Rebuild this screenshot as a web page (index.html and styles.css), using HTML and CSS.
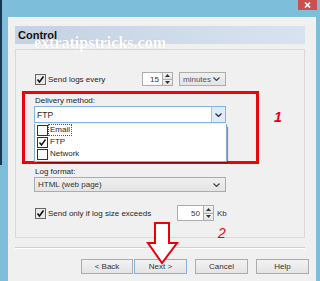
FILE: index.html
```html
<!DOCTYPE html>
<html>
<head>
	<meta charset="UTF-8">
<link rel="stylesheet" href="styles.css">
</head>
<body>
<div class="titlebar">
	<span class="close"><svg width="7" height="6" viewBox="0 0 7 6"><path d="M1 0.5L6 5.5M6 0.5L1 5.5" stroke="#fff" stroke-width="1.6"/></svg></span>
</div>
<div class="dialog">
	<div class="header">Control</div>
	<div class="panel">
		<div class="row row-every">
			<label class="check-label w-every"><span class="check on"><svg width="9" height="9" viewBox="0 0 9 9"><path d="M1.5 4.5L3.5 7L7.5 1.5" stroke="#111" stroke-width="1.6" fill="none"/></svg></span>Send logs every</label>
			<span class="spin spin-every">
				<span class="spin-value">15</span>
				<span class="spin-arrows">
					<span class="spin-btn"><svg width="5" height="3" viewBox="0 0 5 3"><path d="M0 3L2.5 0L5 3Z" fill="#333"/></svg></span>
					<span class="spin-btn"><svg width="5" height="3" viewBox="0 0 5 3"><path d="M0 0L2.5 3L5 0Z" fill="#333"/></svg></span>
				</span>
			</span>
			<span class="select select-minutes"><span class="select-text">minutes</span><svg width="7" height="4" viewBox="0 0 7 4"><path d="M0.5 0.5L3.5 3.5L6.5 0.5" stroke="#444" stroke-width="1.2" fill="none"/></svg></span>
		</div>
		<div class="redbox">
			<div class="caption">Delivery method:</div>
			<div class="combo">
				<span class="combo-text">FTP</span>
				<span class="combo-btn"><svg width="7" height="4" viewBox="0 0 7 4"><path d="M0.5 0.5L3.5 3.5L6.5 0.5" stroke="#333" stroke-width="1.3" fill="none"/></svg></span>
			</div>
			<ul class="droplist">
				<li><span class="check"></span><span class="item focus">Email</span></li>
				<li><span class="check on"><svg width="9" height="9" viewBox="0 0 9 9"><path d="M1.5 4.5L3.5 7L7.5 1.5" stroke="#111" stroke-width="1.4" fill="none"/></svg></span><span class="item">FTP</span></li>
				<li><span class="check"></span><span class="item">Network</span></li>
			</ul>
		</div>
		<div class="caption caption-format">Log format:</div>
		<div class="select select-format"><span class="select-text">HTML (web page)</span><svg width="7" height="4" viewBox="0 0 7 4"><path d="M0.5 0.5L3.5 3.5L6.5 0.5" stroke="#444" stroke-width="1.2" fill="none"/></svg></div>
		<div class="row row-size">
			<label class="check-label w-size"><span class="check on"><svg width="9" height="9" viewBox="0 0 9 9"><path d="M1.5 4.5L3.5 7L7.5 1.5" stroke="#111" stroke-width="1.6" fill="none"/></svg></span>Send only if log size exceeds</label>
			<span class="spin spin-size">
				<span class="spin-value">50</span>
				<span class="spin-arrows">
					<span class="spin-btn"><svg width="5" height="3" viewBox="0 0 5 3"><path d="M0 3L2.5 0L5 3Z" fill="#333"/></svg></span>
					<span class="spin-btn"><svg width="5" height="3" viewBox="0 0 5 3"><path d="M0 0L2.5 3L5 0Z" fill="#333"/></svg></span>
				</span>
			</span>
			<span class="unit">Kb</span>
		</div>
	</div>
	<div class="separator"></div>
	<div class="buttons">
		<button class="btn btn-back">&lt; Back</button>
		<button class="btn btn-next">Next &gt;</button>
		<button class="btn">Cancel</button>
		<button class="btn">Help</button>
	</div>
</div>
<div class="watermark">extratipstricks.com</div>
<span class="mark mark-1">1</span>
<span class="mark mark-2">2</span>
<svg class="arrow" width="34" height="46" viewBox="146 221 34 46"><path d="M155 223L155 243L148 243L162 263L177 243L169 243L169 223Z" fill="#fff" stroke="#e8000b" stroke-width="2"/></svg>
</body>
</html>
```
FILE: styles.css
```css
html,body{margin:0;padding:0;}
body{width:320px;height:281px;overflow:hidden;position:relative;background:linear-gradient(#1b3550,#1b3550) no-repeat 0 0/2px 165px,#7dbedb;font-family:"Liberation Sans",Arial,sans-serif;font-size:8px;color:#1e1e1e;}
.titlebar{height:17px;display:flex;justify-content:flex-end;}
.close{width:19px;height:10px;margin-right:3px;background:#c9504f;display:flex;align-items:center;justify-content:center;}
.dialog{margin-left:8px;width:308px;height:264px;box-sizing:border-box;padding:9px 11px 0 7px;background:#f0f0f0;}
.header{height:18px;line-height:18px;padding-left:3px;font-size:11px;font-weight:bold;color:#111;background:linear-gradient(to right,#c4d2e1,#d7e3f0);}
.panel{margin-top:5px;height:189px;box-sizing:border-box;border:1px solid #d9d9d9;display:flex;flex-direction:column;align-items:flex-start;}
.row{display:flex;align-items:center;padding-left:19px;}
.row-every{margin-top:22px;height:14px;}
.row-size{margin-top:13px;height:16px;}
.check-label{display:flex;align-items:center;gap:2px;}
.w-every{width:107px;}
.w-size{width:142px;}
.check{width:11px;height:11px;box-sizing:border-box;border:1px solid #333;background:#fff;display:flex;align-items:center;justify-content:center;flex-shrink:0;}
.check-label .check{background:#e9e9e9;border-color:#666;}
.spin{display:flex;height:100%;}
.spin-every{width:31px;}
.spin-size{width:37px;}
.spin-value{flex:1;background:#fff;border:1px solid #abadb3;border-right:0;text-align:right;padding-right:3px;display:flex;align-items:center;justify-content:flex-end;color:#333;}
.spin-arrows{width:11px;display:flex;flex-direction:column;}
.spin-btn{flex:1;border:1px solid #acacac;background:linear-gradient(#f3f3f3,#e3e3e3);display:flex;align-items:center;justify-content:center;}
.spin-btn+.spin-btn{border-top:0;}
.select{display:flex;align-items:center;justify-content:space-between;box-sizing:border-box;border:1px solid #acacac;background:linear-gradient(#efefef,#e4e4e4);padding:0 5px 0 3px;color:#333;}
.select-minutes{margin-left:6px;width:47px;height:14px;color:#4a5568;}
.select-format{margin-left:18px;width:192px;height:15px;}
.unit{margin-left:3px;color:#333;}
.redbox{margin-top:5px;margin-left:6px;width:237px;height:73px;box-sizing:border-box;border:3px solid #e8060b;}
.caption{height:10px;line-height:10px;}
.redbox .caption{margin-top:2px;padding-left:10px;}
.caption-format{margin-top:3px;margin-left:19px;}
.combo{margin-left:9px;width:192px;height:17px;box-sizing:border-box;border:1px solid #7eb4ea;background:#fff;display:flex;}
.combo-text{flex:1;padding-left:2px;display:flex;align-items:center;font-size:8.5px;}
.combo-btn{width:13px;background:#dcecfc;border-left:1px solid #9cc6ee;display:flex;align-items:center;justify-content:center;}
.droplist{list-style:none;margin:0 0 0 9px;padding:0;width:193px;height:38px;box-sizing:border-box;border:1px solid #8aaad0;border-top:0;background:#fff;box-shadow:2px 2px 1px -1px rgba(0,0,0,.4);}
.droplist li{height:12px;display:flex;align-items:center;padding-left:2px;gap:1px;}
.droplist li:first-child{margin-top:1px;}
.item{padding:0 1px;line-height:10px;}
.focus{outline:1px dotted #555;outline-offset:0;}
.separator{margin-top:9px;height:1px;border-top:1px solid #d0d0d0;border-bottom:1px solid #fff;height:0;}
.buttons{margin-top:10px;padding-left:66px;display:flex;gap:8px;}
.btn{flex-shrink:0;width:53px;height:15px;padding:0;box-sizing:border-box;border:1px solid #acacac;background:linear-gradient(#f2f2f2,#e4e4e4);font-family:"Liberation Sans",Arial,sans-serif;font-size:8px;color:#333;}
.btn-back{width:52px;margin-right:-7px;}
.btn-next{border-color:#7eb4ea;}
.watermark{position:absolute;left:34px;top:35px;line-height:16px;font-family:"Liberation Serif","Times New Roman",serif;font-weight:bold;font-size:16px;color:#fff;text-shadow:0 0 1px rgba(0,0,0,.15);}
.mark{position:absolute;font-family:"Liberation Sans",Arial,sans-serif;font-style:italic;font-size:14px;line-height:14px;color:#e8000b;}
.mark-1{left:274px;top:110px;font-weight:bold;}
.mark-2{left:218px;top:226px;}
.arrow{position:absolute;left:146px;top:221px;}
```
